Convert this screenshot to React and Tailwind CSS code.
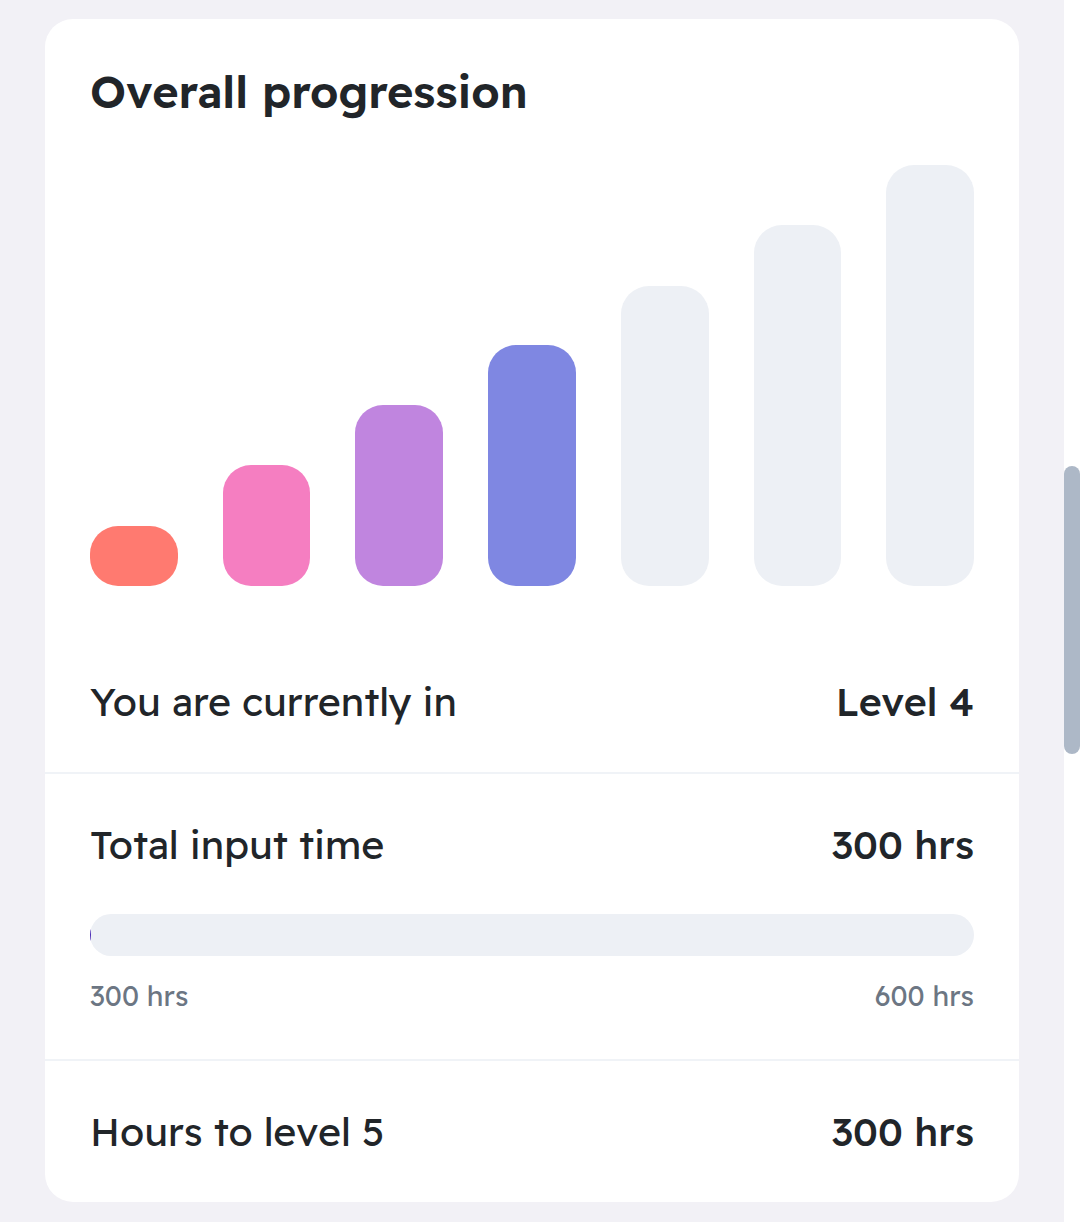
const levels = [
  { id: 1, color: "bg-[#ff7a70]", height: "h-[60px]" },
  { id: 2, color: "bg-[#f57ec1]", height: "h-[121px]" },
  { id: 3, color: "bg-[#c085df]", height: "h-[181px]" },
  { id: 4, color: "bg-[#7f87e2]", height: "h-[241px]" },
  { id: 5, color: "bg-[#edf0f5]", height: "h-[300.5px]" },
  { id: 6, color: "bg-[#edf0f5]", height: "h-[361px]" },
  { id: 7, color: "bg-[#edf0f5]", height: "h-[421px]" },
];

function Row({ label, value }) {
  return (
    <div className="flex justify-between items-center h-[52px] text-[39.375px] leading-[52px] whitespace-nowrap">
      <span>{label}</span>
      <span className="font-medium">{value}</span>
    </div>
  );
}

function App() {
  return (
    <div className="flex h-[1222px] overflow-hidden bg-[#f2f1f6] text-[#212529] font-['Lexend','Inter',sans-serif] [font-feature-settings:'ss01']">
      <div className="ml-[45px] mt-[18.5px] w-[974px] h-[1183.5px] rounded-[28px] bg-white">
        <div className="px-[45px] pt-[43.5px] h-[753.5px]">
          {/* ss01 also swaps the g, so it is off for the second word */}
          <h2 className="h-[59px] text-[45px] leading-[59px] font-semibold whitespace-nowrap">
            Overall{" "}
            <span className="[font-feature-settings:normal]">progression</span>
          </h2>

          {/* level bars */}
          <div className="mt-[44px] h-[421px] flex items-end justify-between">
            {levels.map((level) => (
              <div
                key={level.id}
                className={`w-[87.7px] rounded-[28px] ${level.color} ${level.height}`}
              />
            ))}
          </div>

          <div className="mt-[90px]">
            <Row label="You are currently in" value="Level 4" />
          </div>
        </div>

        <div className="h-[287px] px-[45px] pt-[45px] border-t-2 border-[#f0f3f7]">
          <Row label="Total input time" value="300 hrs" />
          <div className="mt-[43px] h-[42px] rounded-[21px] overflow-hidden bg-[#edf0f5]">
            <div className="w-px h-full bg-[#4b2bb5]" />
          </div>
          <div className="mt-[22px] flex justify-between text-[28.125px] leading-[36px] text-[#6c7683]">
            <span>300 hrs</span>
            <span>600 hrs</span>
          </div>
        </div>

        <div className="px-[45px] pt-[45px] border-t-2 border-[#f0f3f7]">
          <Row label="Hours to level 5" value="300 hrs" />
        </div>
      </div>

      {/* scrollbar */}
      <div className="ml-auto w-4 bg-white">
        <div className="mt-[466px] h-[288px] rounded-full bg-[#adb8c7]" />
      </div>
    </div>
  );
}

export default App;
